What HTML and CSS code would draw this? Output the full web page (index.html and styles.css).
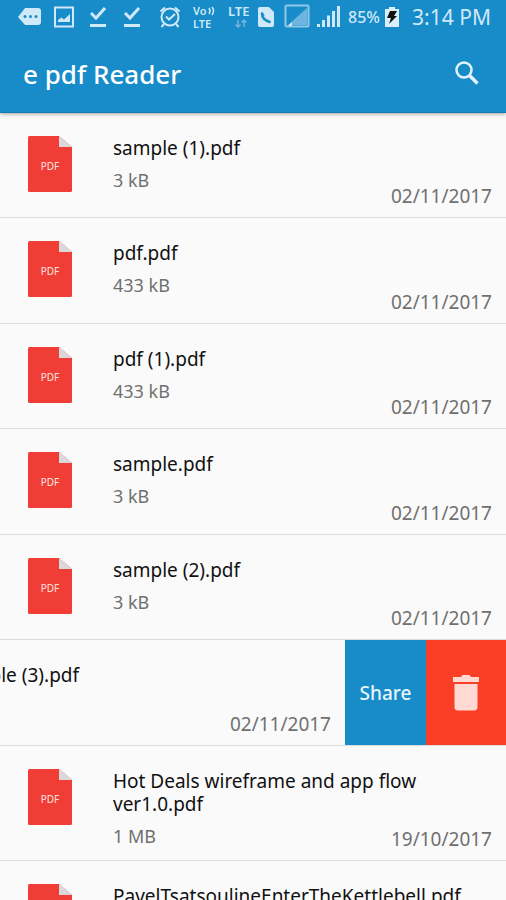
FILE: index.html
```
<!DOCTYPE html>
<html lang="en">
<head>
    <meta charset="UTF-8">
    <meta name="viewport" content="width=device-width, initial-scale=1.0">
    <title>e pdf Reader</title>
    <link rel="stylesheet" href="styles.css">
</head>
<body>
    <!-- shared file icon -->
    <svg class="defs" width="0" height="0" aria-hidden="true">
        <symbol id="pdf-icon" viewBox="0 0 44 56">
            <path fill="#f03e36" d="M1.5 0H31L44 11V54.5Q44 56 42.5 56H1.5Q0 56 0 54.5V1.5Q0 0 1.5 0Z"/>
            <path fill="#d9d9dc" d="M31 0L44 11H31Z"/>
            <text x="22" y="34" fill="#ffe3e0" font-size="10" text-anchor="middle">PDF</text>
        </symbol>
    </svg>

    <header class="header">
        <div class="status-bar">
            <svg class="status-icons" viewBox="0 0 345 34" fill="none" stroke="#cfe9f8" stroke-width="2">
                <!-- message -->
                <path fill="#cfe9f8" stroke="none" d="M25 8H38Q41 8 41 11V22Q41 25 38 25H25L18 17Z"/>
                <g fill="#188bc9" stroke="none">
                    <circle cx="25" cy="16.500" r="1.500"/>
                    <circle cx="30.500" cy="16.500" r="1.500"/>
                    <circle cx="36" cy="16.500" r="1.500"/>
                </g>
                <!-- picture -->
                <rect x="55" y="7.500" width="18" height="19"/>
                <path fill="#cfe9f8" stroke="none" d="M58 22V20L61.500 17.500L64 19.500L70 14V22Z"/>
                <!-- finished downloads -->
                <path stroke-width="3" d="M91 13L96 18L105 8M90 25.500H106"/>
                <path stroke-width="3" d="M125 13L130 18L139 8M124 25.500H140"/>
                <!-- alarm -->
                <circle cx="170" cy="17" r="8.500"/>
                <path d="M166 16.500L169 19.500L175 14M160.500 11.500L165 7.500M179.500 11.500L175 7.500M164 24L161.500 27M176 24L178.500 27"/>
                <!-- network labels -->
                <g class="net-text" stroke="none" fill="#cfe9f8">
                    <text x="193" y="15">Vo</text>
                    <text x="193" y="28">LTE</text>
                    <text class="net-large" x="228" y="16">LTE</text>
                </g>
                <path stroke-width="1.500" d="M209 8Q211 11 209 14M212 7Q215 11 212 15"/>
                <path stroke="#73b8de" stroke-width="1.500" d="M238 20V27M235.500 24.500L238 27L240.500 24.500M244 27V20M241.500 22.500L244 20L246.500 22.500"/>
                <!-- sim with phone -->
                <path fill="#cfe9f8" stroke="none" d="M260 7H269L274 12V25Q274 27 272 27H260Q258 27 258 25V9Q258 7 260 7Z"/>
                <path stroke="#188bc9" stroke-width="2.500" d="M262 13Q262 20 270 22M261.500 12.500L263.500 16M267 20.500L270.500 22.500"/>
                <!-- signal -->
                <rect x="285.500" y="5.500" width="23" height="21" rx="1" stroke="#8ec9e9"/>
                <path fill="#6bb5df" stroke="none" d="M288 25L307 8V25Z"/>
                <path fill="#cfe9f8" stroke="none" d="M288 26L292 22V26Z"/>
                <path stroke-width="3" d="M318.500 27V24M323.500 27V20M328.500 27V15.500M333.500 27V11M338.500 27V6"/>
            </svg>
            <span class="battery-level">85%</span>
            <svg class="battery" viewBox="0 0 14 20">
                <path fill="#d9effb" d="M4 0H10V2H14V20H0V2H4Z"/>
                <path fill="#111" d="M5 4H12L9 9H12L4 17L6 11H2Z"/>
            </svg>
            <time class="clock">3:14 PM</time>
        </div>
        <div class="toolbar">
            <h1>e pdf Reader</h1>
            <button class="search-button" aria-label="Search">
                <svg viewBox="0 0 24 24" fill="none" stroke="#e3f3fc" stroke-width="2.500">
                    <circle cx="9" cy="9" r="7.500"/>
                    <path stroke-width="3.500" d="M14.500 14.500L22.500 22.500"/>
                </svg>
            </button>
        </div>
    </header>

    <main>
        <ul class="file-list">
            <li class="row">
                <div class="file">
                    <svg class="file-icon" aria-hidden="true"><use href="#pdf-icon"/></svg>
                    <div class="info">
                        <p class="name">sample (1).pdf</p>
                        <p class="size">3 kB</p>
                    </div>
                    <time class="date">02/11/2017</time>
                </div>
            </li>
            <li class="row">
                <div class="file">
                    <svg class="file-icon" aria-hidden="true"><use href="#pdf-icon"/></svg>
                    <div class="info">
                        <p class="name">pdf.pdf</p>
                        <p class="size">433 kB</p>
                    </div>
                    <time class="date">02/11/2017</time>
                </div>
            </li>
            <li class="row">
                <div class="file">
                    <svg class="file-icon" aria-hidden="true"><use href="#pdf-icon"/></svg>
                    <div class="info">
                        <p class="name">pdf (1).pdf</p>
                        <p class="size">433 kB</p>
                    </div>
                    <time class="date">02/11/2017</time>
                </div>
            </li>
            <li class="row">
                <div class="file">
                    <svg class="file-icon" aria-hidden="true"><use href="#pdf-icon"/></svg>
                    <div class="info">
                        <p class="name">sample.pdf</p>
                        <p class="size">3 kB</p>
                    </div>
                    <time class="date">02/11/2017</time>
                </div>
            </li>
            <li class="row">
                <div class="file">
                    <svg class="file-icon" aria-hidden="true"><use href="#pdf-icon"/></svg>
                    <div class="info">
                        <p class="name">sample (2).pdf</p>
                        <p class="size">3 kB</p>
                    </div>
                    <time class="date">02/11/2017</time>
                </div>
            </li>
            <!-- swiped open -->
            <li class="row swiped">
                <div class="file">
                    <svg class="file-icon" aria-hidden="true"><use href="#pdf-icon"/></svg>
                    <div class="info">
                        <p class="name">sample (3).pdf</p>
                    </div>
                    <time class="date">02/11/2017</time>
                </div>
                <button class="action share">Share</button>
                <button class="action delete" aria-label="Delete">
                    <svg viewBox="0 0 28 36" fill="#ffd9d2">
                        <path d="M9 2L10.500 0H17.500L19 2H27V7H1V2Z"/>
                        <path d="M2.500 9H25.500V32Q25.500 35.500 22 35.500H6Q2.500 35.500 2.500 32Z"/>
                    </svg>
                </button>
            </li>
            <li class="row">
                <div class="file">
                    <svg class="file-icon" aria-hidden="true"><use href="#pdf-icon"/></svg>
                    <div class="info">
                        <p class="name">Hot Deals wireframe and app flow ver1.0.pdf</p>
                        <p class="size">1 MB</p>
                    </div>
                    <time class="date">19/10/2017</time>
                </div>
            </li>
            <li class="row">
                <div class="file">
                    <svg class="file-icon" aria-hidden="true"><use href="#pdf-icon"/></svg>
                    <div class="info">
                        <p class="name">PavelTsatsoulineEnterTheKettlebell.pdf</p>
                    </div>
                </div>
            </li>
        </ul>
    </main>
</body>
</html>
```
FILE: styles.css
```
* {
    box-sizing: border-box;
}

body {
    margin: 0;
    height: 100vh;
    overflow: hidden;
    display: flex;
    flex-direction: column;
    background-color: #fafafa;
    color: #111;
    font-family: "Noto Sans", "Open Sans", sans-serif;
}

h1, p, ul {
    margin: 0;
    padding: 0;
}

button {
    border: none;
    padding: 0;
    font-family: inherit;
    cursor: pointer;
}

svg {
    display: block;
    flex-shrink: 0;
}

main {
    flex: 1;
    min-height: 0;
    overflow-y: auto;
    scrollbar-width: none;
}

.defs {
    position: absolute;
}

.header {
    flex-shrink: 0;
    background-color: #188bc9;
    color: #fff;
    border-bottom: 1px solid #1479b0;
    box-shadow: 0 1px 4px rgba(0, 0, 0, 0.35);
    z-index: 1;
}

.status-bar {
    display: flex;
    align-items: center;
    height: 34px;
    padding-right: 15px;
    color: #cfe9f8;
}

.status-icons {
    width: 345px;
    height: 34px;
}

.net-text {
    font-size: 11px;
    font-weight: 600;
}

.net-large {
    font-size: 13px;
}

.battery-level {
    margin-left: 3px;
    font-size: 16px;
    font-weight: 500;
}

.battery {
    width: 14px;
    height: 20px;
    margin-left: 5px;
}

.clock {
    margin-left: auto;
    font-size: 21px;
    white-space: nowrap;
}

.toolbar {
    display: flex;
    align-items: center;
    justify-content: space-between;
    height: 78px;
    padding: 0 27px 0 23px;
}

.toolbar h1 {
    font-size: 26px;
    font-weight: 500;
    line-height: 34px;
    padding-top: 2px;
}

.search-button {
    background: none;
}

.file-list {
    list-style: none;
}

.search-button svg {
    width: 24px;
    height: 24px;
}

.row {
    display: flex;
    justify-content: flex-end;
    min-height: 105px;
    overflow: hidden;
    border-bottom: 1px solid #dcdcdc;
}

.row:nth-child(even) {
    min-height: 106px;
}

.file {
    display: flex;
    flex: 0 0 100%;
    padding: 23px 14px 11px 28px;
}

.file-icon {
    width: 44px;
    height: 56px;
    margin-right: 41px;
}

.info {
    flex: 1;
    min-width: 0;
    padding-bottom: 1px;
}

.name {
    padding-top: 1px;
    font-size: 19px;
    line-height: 23px;
}

.size {
    margin-top: 9px;
    font-size: 18px;
    line-height: 23px;
    color: #707070;
}

.date {
    align-self: flex-end;
    margin-left: -40px;
    font-size: 19px;
    line-height: 19px;
    color: #707070;
}

.action {
    display: flex;
    align-items: center;
    justify-content: center;
    color: #e8f5fc;
    font-size: 19px;
    font-weight: 500;
}

.share {
    flex: 0 0 81px;
    background-color: #188bc9;
}

.delete {
    flex: 0 0 80px;
    background-color: #fb3f26;
}

.delete svg {
    width: 28px;
    height: 36px;
}
```
